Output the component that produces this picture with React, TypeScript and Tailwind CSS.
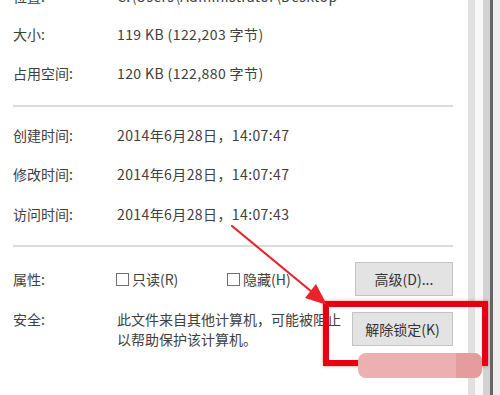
import React from "react";

function Row({ label, value, className = "" }: { label: string; value: string; className?: string }) {
  return (
    <div className={`flex items-center h-[20px] ${className}`}>
      <div className="w-[104px] shrink-0">{label}</div>
      <div className="whitespace-nowrap tracking-[0.4px]">{value}</div>
    </div>
  );
}

function Check({ label, className = "" }: { label: string; className?: string }) {
  return (
    <div className={`flex items-center gap-[3px] ${className}`}>
      <div className="w-[13px] h-[13px] border border-[#707070] bg-white" />
      <span>{label}</span>
    </div>
  );
}

export default function App() {
  return (
    <div className="w-[500px] h-[395px] relative overflow-hidden bg-white flex font-['Noto_Sans_CJK_SC',sans-serif] text-[14px] leading-[20px] text-[#404040]">
      <div className="w-[468px] shrink-0 pl-[13px] pr-[15px] flex flex-col">
        <Row label="位置:" value="C:\Users\Administrator\Desktop" className="-mt-[14px]" />
        <Row label="大小:" value="119 KB (122,203 字节)" className="mt-[18px]" />
        <Row label="占用空间:" value="120 KB (122,880 字节)" className="mt-[19px]" />
        <div className="mt-[22px] h-[2px] bg-[#dadada]" />
        <Row label="创建时间:" value="2014年6月28日，14:07:47" className="mt-[18px]" />
        <Row label="修改时间:" value="2014年6月28日，14:07:47" className="mt-[19px]" />
        <Row label="访问时间:" value="2014年6月28日，14:07:43" className="mt-[20px]" />
        <div className="mt-[21px] h-[2px] bg-[#dadada]" />
        <div className="mt-[15px] h-[34px] flex items-center">
          <div className="w-[104px] shrink-0">属性:</div>
          <Check label="只读(R)" className="w-[111px] -ml-[1px]" />
          <Check label="隐藏(H)" />
          <button className="ml-auto w-[98px] h-[34px] bg-[#e3e3e3] border border-[#c4c4c4] text-[#333] flex items-center justify-center">
            高级(D)...
          </button>
        </div>
        <div className="mt-[16px] h-[34px] flex items-start">
          <div className="w-[104px] shrink-0 -mt-[3px]">安全:</div>
          <div className="-mt-[3px] whitespace-nowrap">
            <div>此文件来自其他计算机，可能被阻止</div>
            <div>以帮助保护该计算机。</div>
          </div>
          <button className="ml-auto w-[101px] h-[34px] bg-[#e3e3e3] border border-[#c4c4c4] text-[#333] flex items-center justify-center">
            解除锁定(K)
          </button>
        </div>
      </div>
      <div className="w-[7px] shrink-0 bg-[#e0e0e0]" />
      <div className="w-[8px] shrink-0 bg-[#f8f8f8]" />
      <div className="w-[7px] shrink-0 bg-[#d2d2d2]" />
      <div className="w-[3px] shrink-0 bg-[#666666]" />
      <div className="w-[7px] shrink-0 bg-[#eeeeee]" />

      {/* annotation: red box */}
      <div className="absolute left-[323px] top-[301px] w-[165px] h-[65px] border-[6px] border-[#e50012] shadow-[0_0_3px_rgba(229,0,18,0.5)]" />
      {/* pink smear */}
      <div className="absolute left-[358px] top-[353px] w-[124px] h-[25px] rounded-[8px] bg-[#ecb0b0] overflow-hidden flex">
        <div className="flex-1" />
        <div className="w-[26px] bg-[#e59c9c]" />
      </div>
      {/* arrow */}
      <svg className="absolute left-0 top-0" width="500" height="395" viewBox="0 0 500 395">
        <line x1="232" y1="226" x2="312" y2="292" stroke="#e8232b" strokeWidth="2.2" strokeLinecap="round" />
        <polygon points="327,305 305,298 316,284" fill="#e8232b" />
      </svg>
    </div>
  );
}
